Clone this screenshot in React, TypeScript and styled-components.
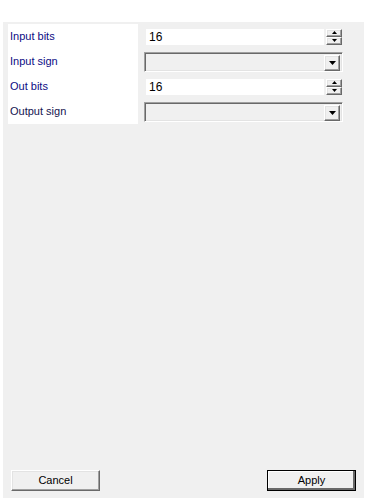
import React from 'react';
import styled, { createGlobalStyle } from 'styled-components';

const GlobalStyle = createGlobalStyle`
  html, body {
    margin: 0;
    padding: 0;
    background: #ffffff;
  }
  body {
    font-family: 'Liberation Sans', Arial, sans-serif;
    font-size: 11px;
  }
`;

interface Field {
  label: string;
  kind: 'spin' | 'combo';
  value?: string;
  dark?: boolean;
}

const fields: Field[] = [
  { label: 'Input bits', kind: 'spin', value: '16' },
  { label: 'Input sign', kind: 'combo' },
  { label: 'Out bits', kind: 'spin', value: '16' },
  { label: 'Output sign', kind: 'combo', dark: true },
];

function App() {
  return (
    <>
      <GlobalStyle />
      <Window>
        <Panel>
          <Grid>
            {fields.map((f) => (
              <React.Fragment key={f.label}>
                <LabelCell dark={f.dark}>{f.label}</LabelCell>
                <ValueCell>
                  {f.kind === 'spin' ? (
                    <SpinBox>
                      <SpinText>{f.value}</SpinText>
                      <SpinButtons>
                        <SpinButton>
                          <Arrow width="5" height="3" viewBox="0 0 5 3">
                            <path d="M2.5 0 L5 3 L0 3 Z" fill="#000" />
                          </Arrow>
                        </SpinButton>
                        <SpinButton>
                          <Arrow width="5" height="3" viewBox="0 0 5 3">
                            <path d="M0 0 L5 0 L2.5 3 Z" fill="#000" />
                          </Arrow>
                        </SpinButton>
                      </SpinButtons>
                    </SpinBox>
                  ) : (
                    <Combo>
                      <ComboButton>
                        <Arrow width="7" height="4" viewBox="0 0 7 4">
                          <path d="M0 0 L7 0 L3.5 4 Z" fill="#000" />
                        </Arrow>
                      </ComboButton>
                    </Combo>
                  )}
                </ValueCell>
              </React.Fragment>
            ))}
          </Grid>
          <Spacer />
          <ButtonRow>
            <PushButton>Cancel</PushButton>
            <PushButton isDefault>Apply</PushButton>
          </ButtonRow>
        </Panel>
      </Window>
    </>
  );
}

const Window = styled.div`
  padding: 22px 4px 3px 3px;
  width: 368px;
  height: 501px;
  box-sizing: border-box;
`;

const Panel = styled.div`
  height: 100%;
  background: #f0f0f0;
  display: flex;
  flex-direction: column;
`;

const Grid = styled.div`
  display: grid;
  grid-template-columns: 130px 206px;
  grid-auto-rows: 25px;
  margin: 2px 0 0 5px;
`;

const LabelCell = styled.div<{ dark?: boolean }>`
  background: #ffffff;
  color: ${({ dark }) => (dark ? '#141450' : '#0c0c84')};
  display: flex;
  align-items: center;
  padding-left: 2px;
  padding-bottom: 1px;
`;

const ValueCell = styled.div`
  display: flex;
  align-items: center;
  padding-left: 6px;
`;

const SpinBox = styled.div`
  display: flex;
  align-items: stretch;
  height: 16px;
  width: 196px;
  margin-left: 2px;
  margin-top: 0;
`;

const SpinText = styled.div`
  flex: 1;
  background: #ffffff;
  color: #000;
  font-size: 12px;
  line-height: 16px;
  padding-left: 3px;
  margin-right: 2px;
`;

const SpinButtons = styled.div`
  width: 16px;
  display: flex;
  flex-direction: column;
`;

const raised = `
  background: #f0f0f0;
  border: 1px solid;
  border-color: #ffffff #696969 #696969 #ffffff;
  box-shadow: inset -1px -1px #a0a0a0, inset 1px 1px #e3e3e3;
  box-sizing: border-box;
`;

const SpinButton = styled.div`
  ${raised}
  flex: 1;
  display: flex;
  align-items: center;
  justify-content: center;
`;

const Arrow = styled.svg`
  display: block;
`;

const Combo = styled.div`
  width: 199px;
  height: 20px;
  box-sizing: border-box;
  background: #f0f0f0;
  border: 1px solid;
  border-color: #a0a0a0 #ffffff #ffffff #a0a0a0;
  box-shadow: inset 1px 1px #696969, inset -1px -1px #e3e3e3;
  display: flex;
  justify-content: flex-end;
  padding: 2px 2px 2px 0;
`;

const ComboButton = styled.div`
  ${raised}
  width: 16px;
  height: 16px;
  display: flex;
  align-items: center;
  justify-content: center;
`;

const Spacer = styled.div`
  flex: 1;
`;

const ButtonRow = styled.div`
  display: flex;
  justify-content: space-between;
  padding: 0 8px 7px 8px;
`;

const PushButton = styled.div<{ isDefault?: boolean }>`
  width: 89px;
  height: 21px;
  box-sizing: border-box;
  background: #f0f0f0;
  border: 1px solid;
  border-color: ${({ isDefault }) =>
    isDefault ? '#000000' : '#ffffff #696969 #696969 #ffffff'};
  box-shadow: ${({ isDefault }) =>
    isDefault
      ? 'inset -2px -2px #696969, inset 1px 1px #ffffff'
      : 'inset -1px -1px #a0a0a0, inset 1px 1px #e3e3e3'};
  display: flex;
  align-items: center;
  justify-content: center;
  color: #000;
  font-size: 11px;
  padding-bottom: 1px;
`;

export default App;
